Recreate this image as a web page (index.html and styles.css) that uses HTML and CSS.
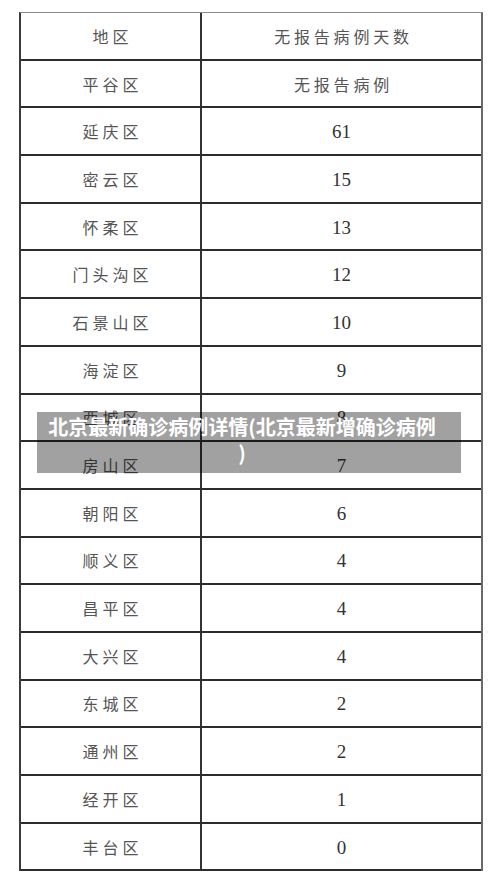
FILE: index.html
```html
<!DOCTYPE html>
<html lang="zh-CN">
<head>
<meta charset="utf-8">
<title>北京最新确诊病例详情</title>
<link rel="stylesheet" href="styles.css">
</head>
<body>
<div class="page">
  <div class="table">
    <div class="row"><div class="cell name">地区</div><div class="cell head">无报告病例天数</div></div>
    <div class="row"><div class="cell name">平谷区</div><div class="cell head">无报告病例</div></div>
    <div class="row"><div class="cell name">延庆区</div><div class="cell num">61</div></div>
    <div class="row"><div class="cell name">密云区</div><div class="cell num">15</div></div>
    <div class="row"><div class="cell name">怀柔区</div><div class="cell num">13</div></div>
    <div class="row"><div class="cell name">门头沟区</div><div class="cell num">12</div></div>
    <div class="row"><div class="cell name">石景山区</div><div class="cell num">10</div></div>
    <div class="row"><div class="cell name">海淀区</div><div class="cell num">9</div></div>
    <div class="row"><div class="cell name">西城区</div><div class="cell num">8</div></div>
    <div class="row"><div class="cell name">房山区</div><div class="cell num">7</div></div>
    <div class="row"><div class="cell name">朝阳区</div><div class="cell num">6</div></div>
    <div class="row"><div class="cell name">顺义区</div><div class="cell num">4</div></div>
    <div class="row"><div class="cell name">昌平区</div><div class="cell num">4</div></div>
    <div class="row"><div class="cell name">大兴区</div><div class="cell num">4</div></div>
    <div class="row"><div class="cell name">东城区</div><div class="cell num">2</div></div>
    <div class="row"><div class="cell name">通州区</div><div class="cell num">2</div></div>
    <div class="row"><div class="cell name">经开区</div><div class="cell num">1</div></div>
    <div class="row"><div class="cell name">丰台区</div><div class="cell num">0</div></div>
  </div>
  <div class="caption"><span class="line">北京最新确诊病例详情(北京最新增确诊病例</span><br>)</div>
</div>
</body>
</html>
```

FILE: styles.css
```css
html, body {
  margin: 0;
  padding: 0;
  background: #ffffff;
}

.page {
  position: relative;
  width: 500px;
  height: 885px;
  padding: 12px 0 0 19px;
  box-sizing: border-box;
}

.table {
  width: 464px;
  box-sizing: border-box;
  border-top: 1px solid #8a8a8a;
  border-left: 2px solid #3a3a3a;
  border-right: 2px solid #6a6a6a;
  display: flex;
  flex-direction: column;
}

.row {
  display: grid;
  grid-template-columns: 181px 1fr;
  height: 47.7px;
  box-sizing: border-box;
  border-bottom: 2px solid #2c2c2c;
}

.cell {
  display: flex;
  align-items: center;
  justify-content: center;
  color: #555555;
}

.name {
  border-right: 2px solid #333333;
  font-family: "Noto Sans CJK SC", sans-serif;
  font-size: 16px;
  letter-spacing: 4px;
  padding-left: 4px;
  font-weight: 400;
}

.head {
  font-family: "Noto Sans CJK SC", sans-serif;
  font-size: 16px;
  letter-spacing: 3.8px;
  padding-left: 4px;
}

.num {
  font-family: "Liberation Serif", "Times New Roman", serif;
  font-size: 19px;
  color: #333333;
  padding-top: 2px;
}

.caption {
  position: absolute;
  left: 37px;
  top: 412px;
  width: 424px;
  height: 61px;
  box-sizing: border-box;
  padding: 2px 14px 0 0;
  background: rgba(0, 0, 0, 0.37);
  color: #ffffff;
  font-family: "Noto Sans CJK SC", sans-serif;
  font-weight: 700;
  font-size: 20px;
  line-height: 26px;
  text-align: center;
}

.line {
  white-space: nowrap;
}
```
